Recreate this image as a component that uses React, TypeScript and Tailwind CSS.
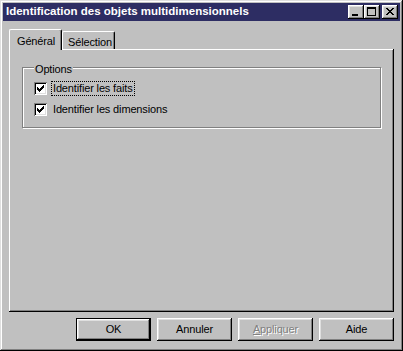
import React from "react";

const raised =
  "shadow-[inset_-1px_-1px_0_#000,inset_1px_1px_0_#fff,inset_-2px_-2px_0_#808080,inset_2px_2px_0_#dfdfdf]";

const TitleButton = ({ children }: { children: React.ReactNode }) => (
  <div className={`w-[16px] h-[14px] bg-[#c0c0c0] ${raised} relative`}>{children}</div>
);

const Check = () => (
  <svg width="7" height="7" viewBox="0 0 7 7" shapeRendering="crispEdges">
    <path d="M6 0h1v3h-1zM5 1h1v3h-1zM4 2h1v3h-1zM3 3h1v3h-1zM2 4h1v3h-1zM1 3h1v3h-1zM0 2h1v3h-1z" fill="#000" />
  </svg>
);

const Checkbox = ({ label, focused }: { label: string; focused?: boolean }) => (
  <div className="flex items-center h-[13px]">
    <div className="w-[13px] h-[13px] bg-white flex items-center justify-center shadow-[inset_1px_1px_0_#808080,inset_-1px_-1px_0_#fff,inset_2px_2px_0_#000,inset_-2px_-2px_0_#dfdfdf]">
      <Check />
    </div>
    <span
      className={`ml-[4px] px-[1px] leading-[13px] border border-dotted ${
        focused ? "border-black" : "border-transparent"
      }`}
    >
      {label}
    </span>
  </div>
);

const Button = ({
  children,
  primary,
  disabled,
}: {
  children: React.ReactNode;
  primary?: boolean;
  disabled?: boolean;
}) => (
  <div
    className={`w-[75px] h-[23px] flex items-center justify-center bg-[#c0c0c0] ${
      primary ? "border border-black" : ""
    } ${raised} ${disabled ? "text-[#808080] [text-shadow:1px_1px_0_#fff]" : "text-black"}`}
  >
    {children}
  </div>
);

export default function App() {
  return (
    <div
      className="w-[403px] h-[351px] bg-[#c0c0c0] p-[3px] flex flex-col text-[11px] tracking-[-0.15px] text-black shadow-[inset_-1px_-1px_0_#000,inset_1px_1px_0_#dfdfdf,inset_-2px_-2px_0_#808080,inset_2px_2px_0_#fff]"
      style={{ fontFamily: '"Liberation Sans", Arial, sans-serif' }}
    >
      {/* title bar */}
      <div className="h-[18px] bg-[#2d2d63] flex items-center pl-[3px] pr-[2px]">
        <span className="flex-1 text-white font-bold text-[11.5px] tracking-normal leading-none whitespace-nowrap">
          Identification des objets multidimensionnels
        </span>
        <div className="flex">
          <TitleButton>
            <div className="absolute left-[4px] top-[9px] w-[6px] h-[2px] bg-black" />
          </TitleButton>
          <TitleButton>
            <div className="absolute left-[3px] top-[2px] w-[9px] h-[9px] border border-t-2 border-black" />
          </TitleButton>
        </div>
        <div className="ml-[2px]">
          <TitleButton>
            <svg className="absolute left-[4px] top-[3px]" width="8" height="7" viewBox="0 0 8 7" shapeRendering="crispEdges">
              <path
                d="M0 0h2v1h-2zM6 0h2v1h-2zM1 1h2v1h-2zM5 1h2v1h-2zM2 2h4v1h-4zM3 3h2v1h-2zM2 4h4v1h-4zM1 5h2v1h-2zM5 5h2v1h-2zM0 6h2v1h-2zM6 6h2v1h-2z"
                fill="#000"
              />
            </svg>
          </TitleButton>
        </div>
      </div>

      {/* body */}
      <div className="flex-1 flex flex-col px-[6px] pt-[8px]">
        <div className="flex items-end h-[20px]">
          <div className="relative z-10 w-[53px] h-[21px] -mb-[1px] bg-[#c0c0c0] border-l border-t border-white border-r border-r-black rounded-t-[2px] shadow-[inset_-1px_0_0_#808080] flex items-start pl-[7px] pt-[3px]">
            Général
          </div>
          <div className="w-[53px] h-[18px] bg-[#c0c0c0] border-l border-t border-white border-r border-r-black rounded-t-[2px] shadow-[inset_-1px_0_0_#808080] flex items-start pl-[5px] pt-[2px]">
            Sélection
          </div>
        </div>

        <div className="h-[263px] bg-[#c0c0c0] px-[13px] pt-[18px] shadow-[inset_-1px_-1px_0_#000,inset_1px_1px_0_#fff,inset_-2px_-2px_0_#808080]">
          <div className="w-[359px] h-[61px] border border-[#808080] shadow-[1px_1px_0_#fff,inset_1px_1px_0_#fff] pl-[11px]">
            <div className="h-0">
              <span className="relative -top-[7px] inline-block px-[1px] bg-[#c0c0c0] leading-[13px]">Options</span>
            </div>
            <div className="flex flex-col gap-[8px] pt-[14px]">
              <Checkbox label="Identifier les faits" focused />
              <Checkbox label="Identifier les dimensions" />
            </div>
          </div>
        </div>

        <div className="flex justify-end gap-[6px] mt-[6px]">
          <Button primary>OK</Button>
          <Button>Annuler</Button>
          <Button disabled>
            <span>
              <span className="underline">A</span>ppliquer
            </span>
          </Button>
          <Button>Aide</Button>
        </div>
      </div>
    </div>
  );
}
